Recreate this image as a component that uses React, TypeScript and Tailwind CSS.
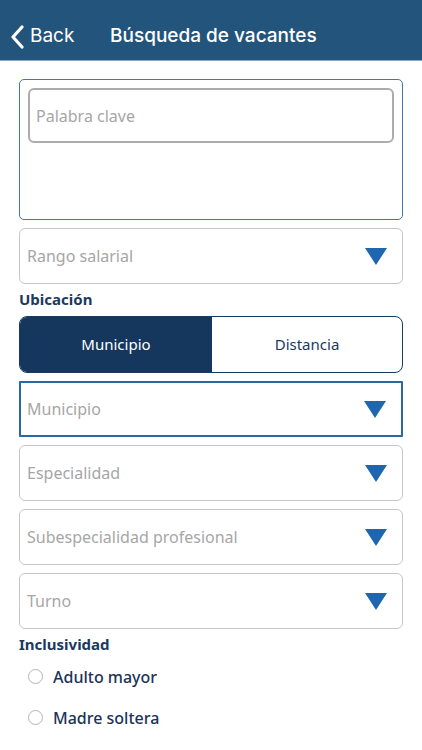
import React from "react";

const Tri = () => (
  <svg width="22" height="17" viewBox="0 0 22 17" className="shrink-0">
    <polygon points="0,0 22,0 11,17" fill="#1e67ae" />
  </svg>
);

const Select = ({ label, active }: { label: string; active?: boolean }) => (
  <div
    className={
      "h-[56px] flex items-center justify-between pr-[15px] bg-white " +
      (active ? "pl-[6px] border-2 border-[#2a67a5] rounded-[1px]" : "pl-[7px] border border-[#c6c6c6] rounded-[6px]")
    }
  >
    <span className="text-[16px] text-[#a6a6a6]">{label}</span>
    <Tri />
  </div>
);

const Radio = ({ label }: { label: string }) => (
  <div className="flex items-center h-[41px] pl-[9px]">
    <div className="w-[15px] h-[15px] rounded-full border border-[#b5b5b5] bg-white" />
    <span className="ml-[10px] text-[16px] font-medium text-[#1c3358]">{label}</span>
  </div>
);

export default function App() {
  return (
    <div className="w-[422px] h-[750px] bg-white overflow-hidden" style={{ fontFamily: "'Noto Sans', 'Open Sans', sans-serif" }}>
      <div className="h-[61px] pt-[13px] bg-[#23557c] border-b border-[#8aa8c2] flex items-center text-white" style={{ fontFamily: "Inter, sans-serif" }}>
        <div className="flex items-center pl-[10px] w-[110px]">
          <svg width="14" height="24" viewBox="0 0 14 24" className="mr-[6px]">
            <polyline points="12,2 3,12 12,22" fill="none" stroke="white" strokeWidth="3.2" strokeLinecap="round" strokeLinejoin="round" />
          </svg>
          <span className="text-[19px]">Back</span>
        </div>
        <span className="text-[19px] font-medium">Búsqueda de vacantes</span>
      </div>

      <div className="px-[19px] pt-[18px]">
        <div className="h-[141px] border border-[#3d78b3] rounded-[5px] p-[8px]">
          <div className="h-[55px] border-2 border-[#acacac] rounded-[6px] flex items-center pl-[6px]">
            <span className="text-[16px] text-[#a6a6a6]">Palabra clave</span>
          </div>
        </div>

        <div className="mt-[8px]">
          <Select label="Rango salarial" />
        </div>

        <div className="mt-[4px] text-[15px] font-bold text-[#1a3a5f] h-[22px] leading-[22px]">Ubicación</div>

        <div className="mt-[6px] h-[57px] flex rounded-[8px] border border-[#1a3a5f] overflow-hidden">
          <div className="w-[192px] bg-[#15375e] flex items-center justify-center text-white text-[15px]">Municipio</div>
          <div className="flex-1 flex items-center justify-center text-[#1a3a5f] text-[15px]">Distancia</div>
        </div>

        <div className="mt-[8px] flex flex-col gap-[8px]">
          <Select label="Municipio" active />
          <Select label="Especialidad" />
          <Select label="Subespecialidad profesional" />
          <Select label="Turno" />
        </div>

        <div className="mt-[6px] text-[15px] font-bold text-[#1a3a5f] h-[18px] leading-[18px]">Inclusividad</div>
        <div className="mt-[3px]">
          <Radio label="Adulto mayor" />
          <Radio label="Madre soltera" />
        </div>
      </div>
    </div>
  );
}
